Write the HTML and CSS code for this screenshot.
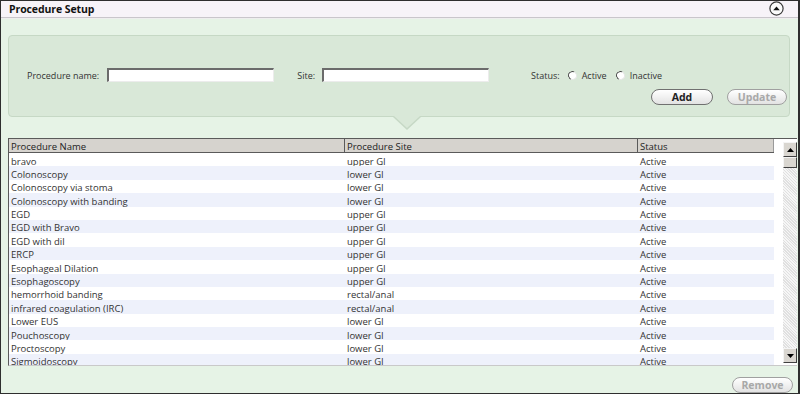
FILE: index.html
```html
<!DOCTYPE html>
<html>
<head>
<meta charset="utf-8">
<link rel="stylesheet" href="styles.css">
</head>
<body>
<div class="frame">
  <div class="titlebar">
    <span class="title">Procedure Setup</span>
    <svg class="collapse" width="15" height="15" viewBox="0 0 15 15">
      <circle cx="7.5" cy="7.5" r="6.6" fill="#fbfbfb" stroke="#3a3a3a" stroke-width="1.2"/>
      <path d="M4.2 9.2 L7.5 5.4 L10.8 9.2 Z" fill="#111"/>
    </svg>
  </div>
  <div class="body">
    <div class="form-panel">
      <div class="fields">
        <label class="lbl">Procedure name:</label>
        <input class="txt" type="text">
        <label class="lbl site-lbl">Site:</label>
        <input class="txt" type="text">
        <label class="lbl status-lbl">Status:</label>
        <span class="radio"></span><span class="opt">Active</span>
        <span class="radio"></span><span class="opt">Inactive</span>
      </div>
      <div class="actions">
        <button class="pill add">Add</button>
        <button class="pill update">Update</button>
      </div>
    </div>
    <div class="grid">
      <div class="grid-main">
        <div class="grid-head">
          <div class="c c1">Procedure Name</div>
          <div class="c c2">Procedure Site</div>
          <div class="c c3">Status</div>
        </div>
        <div class="grid-rows">
          <div class="row"><div class="c c1">bravo</div><div class="c c2">upper GI</div><div class="c c3">Active</div></div>
          <div class="row alt"><div class="c c1">Colonoscopy</div><div class="c c2">lower GI</div><div class="c c3">Active</div></div>
          <div class="row"><div class="c c1">Colonoscopy via stoma</div><div class="c c2">lower GI</div><div class="c c3">Active</div></div>
          <div class="row alt"><div class="c c1">Colonoscopy with banding</div><div class="c c2">lower GI</div><div class="c c3">Active</div></div>
          <div class="row"><div class="c c1">EGD</div><div class="c c2">upper GI</div><div class="c c3">Active</div></div>
          <div class="row alt"><div class="c c1">EGD with Bravo</div><div class="c c2">upper GI</div><div class="c c3">Active</div></div>
          <div class="row"><div class="c c1">EGD with dil</div><div class="c c2">upper GI</div><div class="c c3">Active</div></div>
          <div class="row alt"><div class="c c1">ERCP</div><div class="c c2">upper GI</div><div class="c c3">Active</div></div>
          <div class="row"><div class="c c1">Esophageal Dilation</div><div class="c c2">upper GI</div><div class="c c3">Active</div></div>
          <div class="row alt"><div class="c c1">Esophagoscopy</div><div class="c c2">upper GI</div><div class="c c3">Active</div></div>
          <div class="row"><div class="c c1">hemorrhoid banding</div><div class="c c2">rectal/anal</div><div class="c c3">Active</div></div>
          <div class="row alt"><div class="c c1">infrared coagulation (IRC)</div><div class="c c2">rectal/anal</div><div class="c c3">Active</div></div>
          <div class="row"><div class="c c1">Lower EUS</div><div class="c c2">lower GI</div><div class="c c3">Active</div></div>
          <div class="row alt"><div class="c c1">Pouchoscopy</div><div class="c c2">lower GI</div><div class="c c3">Active</div></div>
          <div class="row"><div class="c c1">Proctoscopy</div><div class="c c2">lower GI</div><div class="c c3">Active</div></div>
          <div class="row alt"><div class="c c1">Sigmoidoscopy</div><div class="c c2">lower GI</div><div class="c c3">Active</div></div>
        </div>
      </div>
      <div class="scrollbar">
        <div class="sb-btn"><svg width="7" height="4" viewBox="0 0 7 4"><path d="M0 4 L3.5 0 L7 4 Z" fill="#000"/></svg></div>
        <div class="sb-thumb"></div>
        <div class="sb-track"></div>
        <div class="sb-btn"><svg width="7" height="4" viewBox="0 0 7 4"><path d="M0 0 L3.5 4 L7 0 Z" fill="#000"/></svg></div>
      </div>
    </div>
    <div class="footer">
      <button class="pill remove">Remove</button>
    </div>
  </div>
</div>
</body>
</html>
```
FILE: styles.css
```css
* { box-sizing: border-box; }
html, body { margin: 0; padding: 0; background: #ffffff; }
body { font-family: "Open Sans", "DejaVu Sans", sans-serif; font-size: 9.5px; color: #333; }

.frame {
  width: 800px;
  height: 394px;
  border: 1px solid #2e2e2e;
  border-right-width: 2px;
  background: #e6f3e6;
  display: flex;
  flex-direction: column;
  overflow: hidden;
}

.titlebar {
  height: 17px;
  flex: none;
  background: #f7f3f8;
  border-bottom: 1px solid #c9c6cb;
  box-shadow: 0 1px 0 #eeeeee;
  display: flex;
  align-items: center;
  justify-content: space-between;
  padding: 0 14px 0 8px;
}
.title { font-weight: 700; font-size: 10.5px; color: #111; letter-spacing: -0.1px; }
.collapse { display: block; margin-top: -1px; }

.body { flex: 1; display: flex; flex-direction: column; min-height: 0; }

.form-panel {
  position: relative;
  margin: 17px 8px 0 7px;
  height: 82px;
  background: #d9e8d8;
  border: 1px solid #c6d8c5;
  border-radius: 4px;
  padding: 32px 2px 0 18px;
  display: flex;
  flex-direction: column;
}
.form-panel::after {
  content: "";
  position: absolute;
  left: 385px;
  bottom: -12px;
  width: 0; height: 0;
  border-left: 13px solid transparent;
  border-right: 13px solid transparent;
  border-top: 12px solid #d9e8d8;
}
.form-panel::before {
  content: "";
  position: absolute;
  left: 384px;
  bottom: -13.5px;
  width: 0; height: 0;
  border-left: 14px solid transparent;
  border-right: 14px solid transparent;
  border-top: 13px solid #c6d8c5;
}

.fields { display: flex; align-items: center; height: 14px; font-size: 9px; }
.lbl { color: #333; margin-right: 8px; white-space: nowrap; }
.site-lbl { margin-left: 23px; margin-right: 7px; }
.status-lbl { margin-left: 42px; margin-right: 8px; }
.txt {
  width: 167px;
  height: 14px;
  margin: 0;
  padding: 0;
  background: #fff;
  border-style: solid;
  border-width: 2px 1px 1px 2px;
  border-color: #6b6b6b #ececec #ececec #6b6b6b;
}
.radio {
  width: 9px; height: 9px;
  border-radius: 50%;
  background: #fff;
  border: 1px solid;
  border-color: #444 #e6e6e6 #e6e6e6 #444;
  transform: rotate(-20deg);
  margin-right: 5px;
}
.opt { margin-right: 9px; color: #333; }

.actions {
  display: flex;
  justify-content: flex-end;
  gap: 14px;
  margin-top: 7px;
}
.pill {
  height: 16px;
  padding: 0;
  border-radius: 8px;
  border: 1px solid #707070;
  background: linear-gradient(#ffffff, #f1f1f1 50%, #e2e2e2);
  font-family: "Open Sans", "DejaVu Sans", sans-serif;
  font-size: 10.5px;
  font-weight: 700;
  color: #222;
  line-height: 13px;
}
.add { width: 62px; }
.update { width: 60px; color: #a8a8a8; border-color: #a0a0a0; }

.grid {
  margin: 21px 1px 0 7px;
  height: 228px;
  flex: none;
  display: flex;
  background: #fff;
  border-left: 1px solid #5a5a5a;
  border-top: 1px solid #5a5a5a;
  border-bottom: 1px solid #c9c9c9;
}
.grid-main { width: 765px; flex: none; overflow: hidden; display: flex; flex-direction: column; }
.grid-head {
  display: flex;
  height: 14px;
  flex: none;
  background: #d6d3ce;
  border-bottom: 1px solid #5a5a5a;
}
.grid-head .c { border-right: 1px solid #5a5a5a; line-height: 13px; padding-top: 1px; color: #222; }
.grid-head .c3 { border-right: 1px solid #9a9a9a; }
.c { padding-left: 2px; white-space: nowrap; overflow: hidden; }
.c1 { width: 336px; }
.c2 { width: 293px; }
.c3 { width: 135px; }
.grid-rows { flex: 1; overflow: hidden; }
.row { display: flex; height: 13.4px; line-height: 13px; background: #ffffff; }
.row .c { border-right: 1px solid transparent; padding-top: 1.5px; }
.row.alt { background: #eef1fb; }
.row .c3, .grid-head .c3 { width: 136px; }

.scrollbar {
  width: 15px;
  margin-left: 9px;
  padding-top: 3px;
  padding-bottom: 2px;
  display: flex;
  flex-direction: column;
}
.sb-btn, .sb-thumb {
  height: 15px;
  flex: none;
  background: #d9d6d0;
  border: 1px solid;
  border-color: #f4f4f4 #404040 #404040 #f4f4f4;
  display: flex;
  align-items: center;
  justify-content: center;
}
.sb-thumb { height: 11px; }
.sb-track {
  flex: 1;
  background-color: #efefef;
  background-image: repeating-linear-gradient(45deg, #e0e0e0 0 1px, #f6f6f6 1px 2px);
}

.footer {
  display: flex;
  justify-content: flex-end;
  padding: 11px 5px 0 0;
}
.remove { width: 61px; color: #a8a8a8; border-color: #a0a0a0; font-size: 10.5px; }
```
